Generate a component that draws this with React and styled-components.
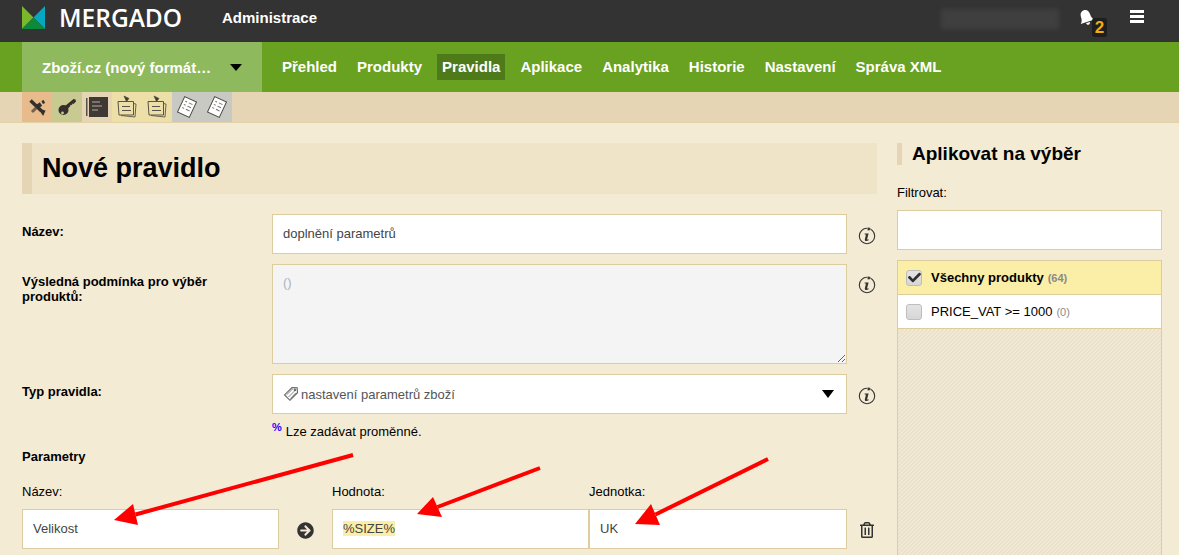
import React from "react";
import styled, { createGlobalStyle } from "styled-components";
import { FaArrowCircleRight, FaRegTrashAlt, FaCheck } from "react-icons/fa";

const GlobalStyle = createGlobalStyle`
  html, body {
    margin: 0;
    padding: 0;
    background: #f4ebd5;
  }
  * {
    box-sizing: border-box;
  }
`;

const Page = styled.div`
  position: relative;
  display: flex;
  flex-direction: column;
  width: 1179px;
  height: 555px;
  overflow: hidden;
  background: #f4ebd5;
  color: #000;
  font-family: "Liberation Sans", Arial, sans-serif;
  font-size: 13px;
`;

const TopBar = styled.header`
  display: flex;
  align-items: flex-start;
  flex: 0 0 42px;
  padding-left: 22px;
  background: #333;
  color: #fff;
`;

const Logo = styled.div`
  display: flex;
  align-items: center;
  gap: 14px;
  width: 200px;
  height: 35px;
`;

const LogoText = styled.span`
  font-family: "Open Sans", sans-serif;
  font-size: 24.5px;
  line-height: 35px;
  font-weight: 600;
  letter-spacing: 0;
`;

const AdminTitle = styled.div`
  font-size: 15px;
  font-weight: bold;
  line-height: 35px;
`;

const UserArea = styled.div`
  display: flex;
  margin-left: auto;
  padding: 9px 35px 0 0;
`;

const BlurredName = styled.div`
  width: 118px;
  height: 20px;
  margin-right: 20px;
  background: #3f3f3f;
  filter: blur(2px);
`;

const Bell = styled.div`
  position: relative;
  width: 14px;
  height: 17px;
  margin-right: 37px;
`;

const BellBadge = styled.span`
  position: absolute;
  left: 13px;
  top: 9px;
  width: 15px;
  height: 19px;
  border-radius: 3px;
  background: #1e1e1e;
  color: #eeaf12;
  font-size: 17px;
  font-weight: bold;
  line-height: 19px;
  text-align: center;
`;

const Burger = styled.div`
  display: flex;
  flex-direction: column;
  gap: 2px;
  width: 14px;
  margin-top: 1px;

  span {
    display: block;
    height: 3px;
    background: #fff;
  }
`;

const NavBar = styled.nav`
  display: flex;
  align-items: center;
  flex: 0 0 50px;
  padding-left: 22px;
  background: #69a120;
`;

const FeedSelect = styled.div`
  display: flex;
  align-items: center;
  justify-content: space-between;
  align-self: stretch;
  width: 240px;
  margin-right: 15px;
  padding: 0 20px;
  background: #8eb95c;
  color: #fff;
  font-size: 15px;
  font-weight: bold;
`;

const Triangle = styled.i`
  display: block;
  width: 0;
  height: 0;
  border-left: ${({ $w }) => $w}px solid transparent;
  border-right: ${({ $w }) => $w}px solid transparent;
  border-top: ${({ $h }) => $h}px solid #000;
`;

const NavItems = styled.div`
  display: flex;
  gap: 10px;
`;

const NavItem = styled.a`
  padding: 0 5px;
  background: ${({ $active }) => ($active ? "#4f7a19" : "transparent")};
  color: #fff;
  font-size: 15px;
  font-weight: bold;
  line-height: 26px;
`;

const TabBar = styled.div`
  display: flex;
  flex: 0 0 31px;
  padding-left: 22px;
  border-bottom: 1px solid #e2d2a8;
  background: #e5d5b5;
`;

const Tab = styled.div`
  display: flex;
  align-items: center;
  justify-content: center;
  width: 30px;
  background: ${({ $bg }) => $bg};
`;

const Main = styled.main`
  display: grid;
  grid-template-columns: 855px 265px;
  gap: 20px;
  flex: 1;
  min-height: 0;
  padding: 20px 0 0 22px;
`;

const Content = styled.section`
  display: flex;
  flex-direction: column;
`;

const Title = styled.h1`
  height: 51px;
  margin: 0 0 20px;
  padding-left: 10px;
  border-left: 10px solid #e5d5b5;
  background: #efe3c8;
  font-size: 27px;
  font-weight: bold;
  line-height: 51px;
`;

const FormRow = styled.div`
  display: grid;
  grid-template-columns: 250px 575px 30px;
  margin-bottom: 10px;
`;

const RowLabel = styled.label`
  padding: 10px 40px 0 0;
  font-weight: bold;
  line-height: 15px;
`;

const IconCell = styled.div`
  display: flex;
  justify-content: center;
  padding-top: ${({ $top }) => $top}px;
  padding-left: ${({ $left }) => $left || 0}px;
  color: #333;
`;

const TextInput = styled.input`
  display: block;
  width: 100%;
  height: 40px;
  padding: 0 10px 2px;
  border: 1px solid #ddcc9d;
  border-radius: 0;
  outline: none;
  background: #fff;
  color: #444;
  font: 13px "Liberation Sans", Arial, sans-serif;
`;

const TextArea = styled.textarea`
  display: block;
  width: 100%;
  height: 100px;
  padding: 10px 10px;
  border: 1px solid #ddcc9d;
  border-radius: 0;
  outline: none;
  background: #f4f4f4;
  color: #a9b2c0;
  font: 13px "Liberation Sans", Arial, sans-serif;
  resize: vertical;
`;

const SelectBox = styled.div`
  display: flex;
  align-items: center;
  height: 40px;
  padding: 0 12px 0 10px;
  border: 1px solid #ddcc9d;
  background: #fff;
  color: #555;
  gap: 2px;

  span {
    flex: 1;
  }
`;

const Hint = styled.div`
  height: 18px;
  margin: -1px 0 8px 250px;
  line-height: 18px;

  sup {
    margin-right: 4px;
    color: #2a00ff;
    font-size: 11px;
    font-weight: bold;
    line-height: 0;
  }
`;

const SectionLabel = styled.div`
  height: 16px;
  margin-bottom: 18px;
  font-weight: bold;
  line-height: 16px;
`;

const ParamGrid = styled.div`
  display: grid;
  grid-template-columns: 257px 53px 257px 258px 30px;
`;

const ParamLabel = styled.div`
  height: 18px;
  margin-bottom: 8px;
  line-height: 18px;
`;

const Highlight = styled.mark`
  background: #fbeea6;
  color: #444;
`;

const FakeInput = styled.div`
  height: 40px;
  padding: 0 10px;
  border: 1px solid #ddcc9d;
  background: #fff;
  color: #444;
  line-height: 38px;
`;

const Sidebar = styled.aside`
  display: flex;
  flex-direction: column;
`;

const SideTitle = styled.h2`
  height: 22px;
  margin: 0 0 19px;
  padding-left: 10px;
  border-left: 5px solid #e5d5b5;
  font-size: 19px;
  font-weight: bold;
  line-height: 22px;
`;

const FilterLabel = styled.div`
  height: 18px;
  margin-bottom: 8px;
  line-height: 18px;
`;

const SelectionList = styled.div`
  display: flex;
  flex-direction: column;
  flex: 1;
  min-height: 0;
  margin: 10px 0 -10px;
  border: 1px solid #ddcc9d;
  background-color: #f2e9d5;
  background-image: linear-gradient(
    135deg,
    #ebe1ca 25%,
    transparent 25%,
    transparent 50%,
    #ebe1ca 50%,
    #ebe1ca 75%,
    transparent 75%
  );
  background-size: 4px 4px;
`;

const SelectionRow = styled.div`
  display: flex;
  align-items: center;
  gap: 9px;
  height: 34px;
  padding-left: 8px;
  border-bottom: 1px solid #ddcc9d;
  background: ${({ $checked }) => ($checked ? "#fbeea6" : "#fff")};
  font-weight: ${({ $checked }) => ($checked ? "bold" : "normal")};
`;

const CheckBox = styled.span`
  display: flex;
  align-items: center;
  justify-content: center;
  width: 16px;
  height: 16px;
  border: 1px solid #bdbdbd;
  border-radius: 3px;
  background: linear-gradient(#e4e4e4, #d6d6d6);
  color: #2e2e2e;
  font-size: 13px;
`;

const Count = styled.small`
  margin-left: 4px;
  color: #8a8a8a;
  font-size: 11px;
`;

const ArrowLayer = styled.svg`
  position: absolute;
  left: 0;
  top: 0;
  pointer-events: none;
`;

const BellIcon = () => (
  <svg width="16" height="19" viewBox="0 0 15 18">
    <g transform="rotate(-18 7 9)" fill="#fff">
      <path d="M7 .8c3.200 0 4.500 2.600 4.500 5.700 0 3 1 4.600 2.300 5.800H.2c1.300-1.200 2.300-2.800 2.300-5.800C2.500 3.400 3.800.8 7 .8z" />
      <path d="M5.200 13.200h3.800c0 1.100-.8 2-1.900 2s-1.900-.9-1.900-2z" />
    </g>
  </svg>
);

const LogoMark = () => (
  <svg width="23" height="23" viewBox="0 0 23 23">
    <path d="M0 0L11.500 11.500 0 23z" fill="#79b82a" />
    <path d="M23 0L11.500 11.500 23 23z" fill="#04a9c1" />
    <path d="M0 23L11.500 11.500 23 23z" fill="#0c8a3c" />
  </svg>
);

const ToolsIcon = () => (
  <svg width="20" height="20" viewBox="0 0 20 20" fill="none" stroke="#33302b">
    <path d="M3.500 3.500l11 10.500" strokeWidth="3.500" />
    <path d="M14 7l-3.500 2.500" strokeWidth="4" />
    <path d="M9 11l-4 4" strokeWidth="3" opacity=".65" />
    <path d="M13 13l4.500 1-1.500 3.500z" fill="#33302b" strokeWidth="1.500" />
    <path d="M15.500 3.500l1.500 3" strokeWidth="2.500" />
  </svg>
);

const KeyIcon = () => (
  <svg width="20" height="20" viewBox="0 0 20 20" fill="#33302b">
    <path fillRule="evenodd" d="M6.500 8a5 5 0 1 1 0 10 5 5 0 0 1 0-10zm-1 6.500a1.400 1.400 0 1 0 0 2.800 1.400 1.400 0 0 0 0-2.800z" />
    <path d="M8 9L16.500 2l2 .5.500 2L16.500 7l-1-.5-.5 1.500-1.500-.2-.3 1.500-3 3z" />
  </svg>
);

const NotebookIcon = () => (
  <svg width="24" height="24" viewBox="0 0 24 24">
    <rect x="1" y="3" width="1.500" height="18" fill="#55504a" />
    <rect x="4" y="2" width="19" height="20" fill="#3e3934" />
    <path d="M7 7h8M7 11h10M7 15h6" stroke="#b7ae9d" strokeWidth="1" />
  </svg>
);

const NoteIcon = () => (
  <svg width="24" height="24" viewBox="0 0 24 24" fill="none" stroke="#5a5448">
    <path d="M6 20.500l14 1.500 1-13-2.500-.5" strokeWidth=".9" />
    <path d="M3 6.500h15.500v13.500H4z" fill="#ece0a8" strokeWidth="1" />
    <path d="M7 11.500h8M7 15.500h9" strokeWidth="1" />
    <path d="M9 1l2.500 5.500L14 3.500z" fill="#3a352e" strokeWidth=".8" />
  </svg>
);

const ListIcon = () => (
  <svg width="24" height="24" viewBox="0 0 24 24" stroke="#4a4a46">
    <g transform="rotate(25 12 12)">
      <rect x="5.500" y="3.500" width="13" height="17" fill="#fff" strokeWidth="1" />
      <path d="M8 7.500h2M12 7.500h4M8 11h2M12 11h4M8 14.500h2M12 14.500h4" strokeWidth="1" stroke="#77776f" />
    </g>
  </svg>
);

const InfoIcon = () => (
  <svg width="18" height="19" viewBox="0 0 18 19" fill="#333">
    <circle cx="9" cy="10" r="7.700" fill="none" stroke="#333" strokeWidth="1.100" />
    <circle cx="10.800" cy="3" r="1.700" fill="#333" stroke="#f4ebd5" strokeWidth=".5" />
    <path d="M6.700 7.400h3.900l-1.500 5.800c-.1.500.4.500 1.500.1v1c-1.700.8-4 1.100-3.800-.9l1.100-4.600c.1-.4-.6-.4-1.300-.3z" />
  </svg>
);

const TagIcon = () => (
  <svg width="16" height="16" viewBox="0 0 16 16" fill="none" stroke="#666" strokeWidth="1.100">
    <path d="M9 1.500l5.200.2.300 5L7 14.300 1.500 8.900z" />
    <path d="M3.500 8.900l6.500-6.300M5.500 11l6.600-6.600M7.300 12.600l5.600-5.800" strokeWidth=".8" />
    <circle cx="12" cy="3.800" r=".8" />
  </svg>
);

const RedArrow = ({ tail, tip, a, b }) => (
  <g>
    <line x1={tail[0]} y1={tail[1]} x2={(a[0] + b[0]) / 2} y2={(a[1] + b[1]) / 2} stroke="#f00" strokeWidth="4" />
    <polygon points={`${tip.join(",")} ${a.join(",")} ${b.join(",")}`} fill="#f00" />
  </g>
);

const navItems = ["Přehled", "Produkty", "Pravidla", "Aplikace", "Analytika", "Historie", "Nastavení", "Správa XML"];

const tabs = [
  { bg: "#e8bb8c", icon: <ToolsIcon /> },
  { bg: "#c8ca92", icon: <KeyIcon /> },
  { bg: "#e5d5b5", icon: <NotebookIcon /> },
  { bg: "#ece0a8", icon: <NoteIcon /> },
  { bg: "#ece0a8", icon: <NoteIcon /> },
  { bg: "#c9c9c3", icon: <ListIcon /> },
  { bg: "#c9c9c3", icon: <ListIcon /> }
];

export default function App() {
  return (
    <Page>
      <GlobalStyle />
      <TopBar>
        <Logo>
          <LogoMark />
          <LogoText>MERGADO</LogoText>
        </Logo>
        <AdminTitle>Administrace</AdminTitle>
        <UserArea>
          <BlurredName />
          <Bell>
            <BellIcon />
            <BellBadge>2</BellBadge>
          </Bell>
          <Burger>
            <span />
            <span />
            <span />
          </Burger>
        </UserArea>
      </TopBar>

      <NavBar>
        <FeedSelect>
          Zboží.cz (nový formát…
          <Triangle $w={6} $h={7} />
        </FeedSelect>
        <NavItems>
          {navItems.map(item => (
            <NavItem key={item} $active={item === "Pravidla"}>
              {item}
            </NavItem>
          ))}
        </NavItems>
      </NavBar>

      <TabBar>
        {tabs.map((tab, i) => (
          <Tab key={i} $bg={tab.bg}>
            {tab.icon}
          </Tab>
        ))}
      </TabBar>

      <Main>
        <Content>
          <Title>Nové pravidlo</Title>

          <FormRow>
            <RowLabel>Název:</RowLabel>
            <TextInput readOnly value="doplnění parametrů" />
            <IconCell $top={12} $left={10}>
              <InfoIcon />
            </IconCell>
          </FormRow>

          <FormRow>
            <RowLabel>Výsledná podmínka pro výběr produktů:</RowLabel>
            <TextArea readOnly value="()" />
            <IconCell $top={11} $left={10}>
              <InfoIcon />
            </IconCell>
          </FormRow>

          <FormRow>
            <RowLabel>Typ pravidla:</RowLabel>
            <SelectBox>
              <TagIcon />
              <span>nastavení parametrů zboží</span>
              <Triangle $w={6} $h={8} />
            </SelectBox>
            <IconCell $top={12} $left={10}>
              <InfoIcon />
            </IconCell>
          </FormRow>

          <Hint>
            <sup>%</sup>Lze zadávat proměnné.
          </Hint>

          <SectionLabel>Parametry</SectionLabel>

          <ParamGrid>
            <div>
              <ParamLabel>Název:</ParamLabel>
              <TextInput readOnly value="Velikost" />
            </div>
            <IconCell $top={39}>
              <FaArrowCircleRight size={17} />
            </IconCell>
            <div>
              <ParamLabel>Hodnota:</ParamLabel>
              <FakeInput>
                <Highlight>%SIZE%</Highlight>
              </FakeInput>
            </div>
            <div>
              <ParamLabel>Jednotka:</ParamLabel>
              <TextInput readOnly value="UK" />
            </div>
            <IconCell $top={39} $left={10}>
              <FaRegTrashAlt size={16} />
            </IconCell>
          </ParamGrid>
        </Content>

        <Sidebar>
          <SideTitle>Aplikovat na výběr</SideTitle>
          <FilterLabel>Filtrovat:</FilterLabel>
          <TextInput readOnly />
          <SelectionList>
            <SelectionRow $checked>
              <CheckBox>
                <FaCheck />
              </CheckBox>
              <span>
                Všechny produkty<Count>(64)</Count>
              </span>
            </SelectionRow>
            <SelectionRow>
              <CheckBox />
              <span>
                PRICE_VAT &gt;= 1000<Count>(0)</Count>
              </span>
            </SelectionRow>
          </SelectionList>
        </Sidebar>
      </Main>

      <ArrowLayer width="1179" height="555">
        <RedArrow tail={[353, 455]} tip={[114, 520]} a={[133, 504]} b={[138, 525]} />
        <RedArrow tail={[540, 468]} tip={[417, 514]} a={[433, 497]} b={[442, 517]} />
        <RedArrow tail={[768, 459]} tip={[635, 524]} a={[651, 504]} b={[660, 525]} />
      </ArrowLayer>
    </Page>
  );
}
